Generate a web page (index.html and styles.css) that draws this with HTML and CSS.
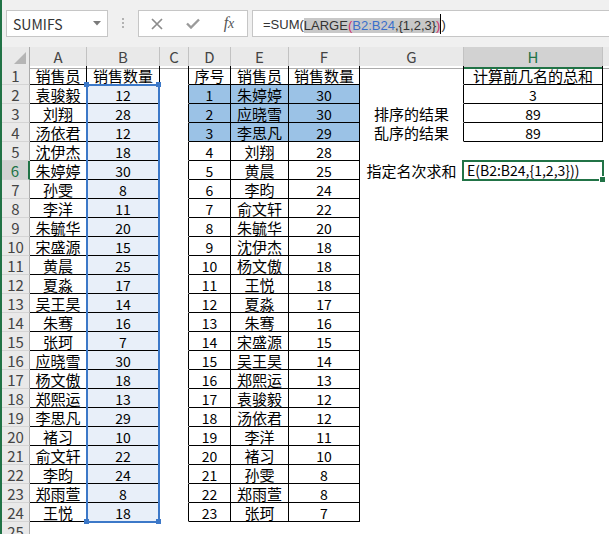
FILE: index.html
```html
<!DOCTYPE html>
<html>
<head>
<meta charset="utf-8">
<link rel="stylesheet" href="styles.css">
</head>
<body>
<div class="app">
  <div class="toolbar">
    <div class="namebox"><span>SUMIFS</span><svg width="8" height="5" viewBox="0 0 8 5"><path d="M0 0H8L4 4.5Z" fill="#7a7a7a"/></svg></div>
    <div class="dots"><svg width="3" height="11" viewBox="0 0 3 11"><rect x="0" y="0" width="2" height="2" fill="#b2b2b2"/><rect x="0" y="4" width="2" height="2" fill="#b2b2b2"/><rect x="0" y="8" width="2" height="2" fill="#b2b2b2"/></svg></div>
    <div class="fbtns">
      <div class="slot"><svg width="12" height="12" viewBox="0 0 12 12"><path d="M1 1L11 11M11 1L1 11" stroke="#8c8c8c" stroke-width="1.7" fill="none"/></svg></div>
      <div class="slot"><svg width="14" height="11" viewBox="0 0 14 11"><path d="M1 5.5L5 9.5L13 1.5" stroke="#9a9a9a" stroke-width="2.4" fill="none"/></svg></div>
      <div class="slot"><span class="fxi">f<span class="fxx">x</span></span></div>
    </div>
    <div class="finput"><span class="ft">=SUM(</span><span class="fsel">LARGE<span class="fr">(</span><span class="fb">B2:B24</span>,{1,2,3}<span class="fr">)</span></span><span class="caret"></span><span class="ft">)</span></div>
  </div>

  <div class="colhdr">
    <div class="ch corner"><svg width="27" height="18" viewBox="0 0 27 18"><path d="M24 5V17H12Z" fill="#b5b5b5"/></svg></div>
    <div class="ch">A</div><div class="ch">B</div><div class="ch">C</div><div class="ch">D</div><div class="ch">E</div><div class="ch">F</div><div class="ch">G</div><div class="ch act">H</div><div class="ch last"></div>
  </div>

  <div class="grid">
    <div class="rh">1</div><div class="c t">销售员</div><div class="c t">销售数量</div><div class="c tl"></div><div class="c t">序号</div><div class="c t">销售员</div><div class="c t">销售数量</div><div class="c tl"></div><div class="c t">计算前几名的总和</div>
    <div class="rh">2</div><div class="c t">袁骏毅</div><div class="c t bb n">12</div><div class="c tl"></div><div class="c t hl n">1</div><div class="c t hl">朱婷婷</div><div class="c t hl n">30</div><div class="c tl"></div><div class="c t n">3</div>
    <div class="rh">3</div><div class="c t">刘翔</div><div class="c t bb n">28</div><div class="c tl"></div><div class="c t hl n">2</div><div class="c t hl">应晓雪</div><div class="c t hl n">30</div><div class="c tl">排序的结果</div><div class="c t n">89</div>
    <div class="rh">4</div><div class="c t">汤依君</div><div class="c t bb n">12</div><div class="c tl"></div><div class="c t hl n">3</div><div class="c t hl">李思凡</div><div class="c t hl n">29</div><div class="c tl">乱序的结果</div><div class="c t n">89</div>
    <div class="rh">5</div><div class="c t">沈伊杰</div><div class="c t bb n">18</div><div class="c tl"></div><div class="c t n">4</div><div class="c t">刘翔</div><div class="c t n">28</div>
    <div class="rh act">6</div><div class="c t">朱婷婷</div><div class="c t bb n">30</div><div class="c tl"></div><div class="c t n">5</div><div class="c t">黄晨</div><div class="c t n">25</div><div class="c">指定名次求和</div>
    <div class="rh">7</div><div class="c t">孙雯</div><div class="c t bb n">8</div><div class="c tl"></div><div class="c t n">6</div><div class="c t">李昀</div><div class="c t n">24</div>
    <div class="rh">8</div><div class="c t">李洋</div><div class="c t bb n">11</div><div class="c tl"></div><div class="c t n">7</div><div class="c t">俞文轩</div><div class="c t n">22</div>
    <div class="rh">9</div><div class="c t">朱毓华</div><div class="c t bb n">20</div><div class="c tl"></div><div class="c t n">8</div><div class="c t">朱毓华</div><div class="c t n">20</div>
    <div class="rh">10</div><div class="c t">宋盛源</div><div class="c t bb n">15</div><div class="c tl"></div><div class="c t n">9</div><div class="c t">沈伊杰</div><div class="c t n">18</div>
    <div class="rh">11</div><div class="c t">黄晨</div><div class="c t bb n">25</div><div class="c tl"></div><div class="c t n">10</div><div class="c t">杨文傲</div><div class="c t n">18</div>
    <div class="rh">12</div><div class="c t">夏淼</div><div class="c t bb n">17</div><div class="c tl"></div><div class="c t n">11</div><div class="c t">王悦</div><div class="c t n">18</div>
    <div class="rh">13</div><div class="c t">吴王昊</div><div class="c t bb n">14</div><div class="c tl"></div><div class="c t n">12</div><div class="c t">夏淼</div><div class="c t n">17</div>
    <div class="rh">14</div><div class="c t">朱骞</div><div class="c t bb n">16</div><div class="c tl"></div><div class="c t n">13</div><div class="c t">朱骞</div><div class="c t n">16</div>
    <div class="rh">15</div><div class="c t">张珂</div><div class="c t bb n">7</div><div class="c tl"></div><div class="c t n">14</div><div class="c t">宋盛源</div><div class="c t n">15</div>
    <div class="rh">16</div><div class="c t">应晓雪</div><div class="c t bb n">30</div><div class="c tl"></div><div class="c t n">15</div><div class="c t">吴王昊</div><div class="c t n">14</div>
    <div class="rh">17</div><div class="c t">杨文傲</div><div class="c t bb n">18</div><div class="c tl"></div><div class="c t n">16</div><div class="c t">郑熙运</div><div class="c t n">13</div>
    <div class="rh">18</div><div class="c t">郑熙运</div><div class="c t bb n">13</div><div class="c tl"></div><div class="c t n">17</div><div class="c t">袁骏毅</div><div class="c t n">12</div>
    <div class="rh">19</div><div class="c t">李思凡</div><div class="c t bb n">29</div><div class="c tl"></div><div class="c t n">18</div><div class="c t">汤依君</div><div class="c t n">12</div>
    <div class="rh">20</div><div class="c t">褚习</div><div class="c t bb n">10</div><div class="c tl"></div><div class="c t n">19</div><div class="c t">李洋</div><div class="c t n">11</div>
    <div class="rh">21</div><div class="c t">俞文轩</div><div class="c t bb n">22</div><div class="c tl"></div><div class="c t n">20</div><div class="c t">褚习</div><div class="c t n">10</div>
    <div class="rh">22</div><div class="c t">李昀</div><div class="c t bb n">24</div><div class="c tl"></div><div class="c t n">21</div><div class="c t">孙雯</div><div class="c t n">8</div>
    <div class="rh">23</div><div class="c t">郑雨萱</div><div class="c t bb n">8</div><div class="c tl"></div><div class="c t n">22</div><div class="c t">郑雨萱</div><div class="c t n">8</div>
    <div class="rh">24</div><div class="c t">王悦</div><div class="c t bb n">18</div><div class="c tl"></div><div class="c t n">23</div><div class="c t">张珂</div><div class="c t n">7</div>
    <div class="rh">25</div>

    <div class="range"></div>
    <div class="handle h-tl"></div>
    <div class="handle h-tr"></div>
    <div class="handle h-bl"></div>
    <div class="handle h-br"></div>

    <div class="editcell">E(B2:B24,{1,2,3}))</div>
    <div class="fill"></div>
  </div>
</div>
</body>
</html>
```

FILE: styles.css
```css
* { box-sizing: border-box; }
html, body { margin: 0; padding: 0; }
body {
  width: 609px;
  height: 534px;
  overflow: hidden;
  background: #fff;
  font-family: "Noto Sans CJK SC", sans-serif;
}
.app {
  border-left: 2px solid #217346;
  height: 534px;
  overflow: hidden;
}

/* toolbar / formula bar */
.toolbar {
  height: 47px;
  background: #f0f0f0;
  display: flex;
  align-items: flex-start;
  padding: 10px 0 0 4px;
}
.namebox {
  width: 102px;
  height: 27px;
  flex: none;
  background: #fff;
  border: 1px solid #c6c6c6;
  display: flex;
  align-items: center;
  justify-content: space-between;
  padding: 0 6px;
  font-size: 14px;
  color: #333;
}
.dots {
  width: 30px;
  height: 27px;
  flex: none;
  display: flex;
  align-items: center;
  justify-content: center;
}
.fbtns {
  width: 110px;
  height: 27px;
  flex: none;
  background: #fff;
  border: 1px solid #c6c6c6;
  display: flex;
}
.slot {
  width: 36px;
  display: flex;
  align-items: center;
  justify-content: center;
}
.fxi {
  font-family: "Liberation Serif", serif;
  font-style: italic;
  font-size: 16px;
  color: #555;
  line-height: 16px;
}
.fxx { font-size: 14px; }
.finput {
  flex: 1;
  height: 27px;
  margin-left: 4px;
  background: #fff;
  border: 1px solid #c6c6c6;
  border-right: none;
  padding-left: 10px;
  font-family: "Liberation Sans", sans-serif;
  font-size: 13px;
  line-height: 28px;
  color: #333;
  white-space: nowrap;
  overflow: hidden;
}
.fsel {
  display: inline-block;
  background: #c8c8c8;
  line-height: 15px;
  height: 15px;
  vertical-align: -1px;
}
.fr { color: #d0306a; }
.fb { color: #3a6fcb; }
.caret {
  display: inline-block;
  width: 1px;
  height: 20px;
  background: #000;
  vertical-align: -5px;
}

/* column headers */
.colhdr {
  display: grid;
  grid-template-columns: 28px 57px 73px 29px 42px 58px 71px 104px 139px 1fr;
  height: 19px;
  background: #e9e9e9;
}
.ch {
  border-right: 1px solid #c2c2c2;
  border-bottom: 1px solid #ababab;
  text-align: center;
  font-size: 15px;
  line-height: 20px;
  color: #444;
}
.ch.corner { border-right-color: #ababab; }
.ch.corner svg { display: block; }
.ch.act {
  background: #d2d2d2;
  color: #217346;
  border-bottom: 2px solid #217346;
}
.ch.last { border-right: none; }

/* sheet grid */
.grid {
  position: relative;
  display: grid;
  grid-template-columns: 28px 57px 73px 29px 42px 58px 71px 104px 139px;
  grid-auto-rows: 19px;
}
.rh {
  grid-column: 1;
  background: #e9e9e9;
  border-right: 1px solid #ababab;
  border-bottom: 1px solid #d4d4d4;
  text-align: center;
  font-size: 15px;
  line-height: 20px;
  color: #444;
}
.rh.act {
  background: #d2d2d2;
  color: #217346;
  border-right: 2px solid #217346;
}
.c {
  border-right: 1px solid transparent;
  border-bottom: 1px solid transparent;
  text-align: center;
  font-size: 15px;
  line-height: 20px;
  color: #000;
  white-space: nowrap;
}
.c.t { border-color: #000; }
.c.tl { border-right-color: #000; }
.c.n { font-size: 14px; }
.c.bb { background: #e8eff9; }
.c.hl { background: #9bc2e6; }

/* formula reference highlight over B2:B24 */
.range {
  position: absolute;
  left: 84px;
  top: 18px;
  width: 74px;
  height: 439px;
  border: 2px solid #3c78c8;
}
.handle {
  position: absolute;
  width: 5px;
  height: 5px;
  background: #3c78c8;
}
.h-tl { left: 82px; top: 16px; }
.h-tr { left: 154px; top: 16px; }
.h-bl { left: 82px; top: 453px; }
.h-br { left: 154px; top: 453px; }

/* active cell H6 in edit mode */
.editcell {
  position: absolute;
  left: 460px;
  top: 94px;
  width: 142px;
  height: 21px;
  border: 2px solid #217346;
  background: #fff;
  padding-left: 3px;
  font-size: 14px;
  line-height: 17px;
  color: #000;
  white-space: nowrap;
  overflow: hidden;
}
.fill {
  position: absolute;
  left: 597px;
  top: 110px;
  width: 7px;
  height: 7px;
  background: #217346;
  border: 1px solid #fff;
}
```
